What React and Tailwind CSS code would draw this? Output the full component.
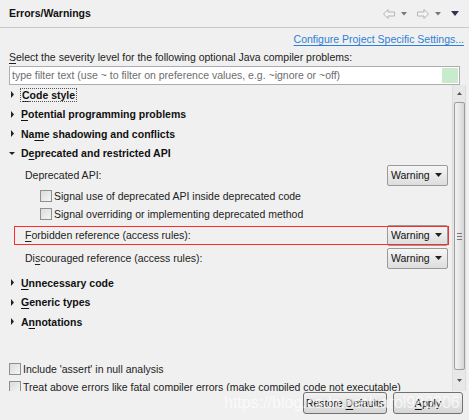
import React from 'react';

const font = { fontFamily: '"Liberation Sans", Arial, sans-serif' };

const Arrow = ({ open }) => (
  <svg width="7" height="7" viewBox="0 0 7 7" className="shrink-0">
    {open ? <path d="M0 2 L6 2 L3 5 Z" fill="#222" /> : <path d="M2 0 L5 3.5 L2 7 Z" fill="#222" />}
  </svg>
);

const U = ({ children }) => <span className="underline underline-offset-2">{children}</span>;

const TreeRow = ({ open, children, focus }) => (
  <div className="h-[19.5px] shrink-0 flex items-center pl-[9px] gap-[5px]">
    <Arrow open={open} />
    <span className={`font-bold text-[#111] ${focus ? 'outline outline-1 outline-dotted outline-[#555] px-[1px] py-[1px]' : ''}`}>{children}</span>
  </div>
);

const Combo = () => (
  <div className="w-[61px] h-[21px] shrink-0 flex items-center justify-between pl-[3px] pr-[5px] border border-[#9a9a9a] rounded-[2px] bg-gradient-to-b from-[#f6f6f6] to-[#dddddd] text-[#111]">
    <span>Warning</span>
    <svg width="7" height="4" viewBox="0 0 7 4"><path d="M0 0 L7 0 L3.5 4 Z" fill="#222" /></svg>
  </div>
);

const Check = ({ children, className = '' }) => (
  <div className={`h-[18px] shrink-0 flex items-center gap-[2px] whitespace-nowrap ${className}`}>
    <div className="w-[12px] h-[12px] shrink-0 border border-[#8e8f8f] bg-gradient-to-br from-[#dcdcdc] to-[#f4f4f4]" />
    <span className="text-[#222]">{children}</span>
  </div>
);

const SettingRow = ({ label, h = 'h-[22px]' }) => (
  <div className={`${h} shrink-0 flex items-center justify-between pl-[25px] pr-[4px]`}>
    <span className="text-[#222]">{label}</span>
    <Combo />
  </div>
);

export default function App() {
  return (
    <div style={font} className="relative w-[469px] h-[420px] overflow-hidden bg-[#f0f0f0] text-[10.5px] leading-none">
      {/* header */}
      <div className="h-[28px] flex items-center justify-between pl-[9px] pr-[10px] border-b border-[#c8c8c8]">
        <span className="font-bold text-[10.5px] text-[#111]">Errors/Warnings</span>
        <div className="flex items-center gap-[6px]">
          <svg width="12" height="10" viewBox="0 0 12 10"><path d="M0.5 5 L5 0.5 L5 3 L11.5 3 L11.5 7 L5 7 L5 9.5 Z" fill="#f4f4f4" stroke="#b4b4b4" /></svg>
          <svg width="6" height="4" viewBox="0 0 6 4"><path d="M0 0 L6 0 L3 3.5 Z" fill="#777" /></svg>
          <svg width="12" height="10" viewBox="0 0 12 10" className="ml-[4px]"><path d="M11.5 5 L7 0.5 L7 3 L0.5 3 L0.5 7 L7 7 L7 9.5 Z" fill="#f4f4f4" stroke="#b4b4b4" /></svg>
          <svg width="6" height="4" viewBox="0 0 6 4"><path d="M0 0 L6 0 L3 3.5 Z" fill="#777" /></svg>
          <svg width="8" height="5" viewBox="0 0 8 5" className="ml-[4px]"><path d="M0 0 L8 0 L4 5 Z" fill="#333355" /></svg>
        </div>
      </div>

      {/* link */}
      <div className="h-[22px] flex items-center justify-end pr-[5px]">
        <span className="text-[#2f7fd6] underline underline-offset-2">Configure Project Specific Settings...</span>
      </div>

      <div className="h-[15px] flex items-center pl-[9px] text-[#222]">
        <span><U>S</U>elect the severity level for the following optional Java compiler problems:</span>
      </div>

      {/* filter */}
      <div className="mx-[9px] mt-[1px] h-[19px] flex items-center justify-between border border-[#abadb3] bg-white pl-[2px] pr-[1px]">
        <span className="text-[#6d6d6d]">type filter text (use ~ to filter on preference values, e.g. ~ignore or ~off)</span>
        <div className="w-[16px] h-[15px] bg-[#c8eccb]" />
      </div>

      {/* scrolled content */}
      <div className="h-[306px] flex">
        <div className="flex-1 flex flex-col overflow-hidden">
          <TreeRow focus><U>C</U>ode style</TreeRow>
          <TreeRow><U>P</U>otential programming problems</TreeRow>
          <TreeRow>Na<U>m</U>e shadowing and conflicts</TreeRow>
          <TreeRow open>D<U>e</U>precated and restricted API</TreeRow>
          <SettingRow h="h-[24px]" label="Deprecated API:" />
          <Check className="pl-[40px]">Signal use of deprecated API inside deprecated code</Check>
          <Check className="pl-[40px]">Signal overriding or implementing deprecated method</Check>
          <div className="relative h-[24px] shrink-0">
            <SettingRow h="h-[24px]" label={<><U>F</U>orbidden reference (access rules):</>} />
            <div className="absolute left-[15px] right-[4px] top-[4px] h-[17px] shadow-[0_0_0_1px_#ff2b2b] pointer-events-none" />
          </div>
          <SettingRow label={<>Di<U>s</U>couraged reference (access rules):</>} />
          <div className="h-[4px] shrink-0" />
          <TreeRow><U>U</U>nnecessary code</TreeRow>
          <TreeRow><U>G</U>eneric types</TreeRow>
          <TreeRow>A<U>n</U>notations</TreeRow>
          <div className="h-[28.5px] shrink-0" />
          <Check className="pl-[9px]">Include 'assert' in null analysis</Check>
          <Check className="pl-[9px]">Treat above errors like fatal compiler errors (make compiled code not executable)</Check>
        </div>

        {/* scrollbar */}
        <div className="w-[14px] mr-[3px] flex flex-col items-center bg-[#e8e8e8] border-x border-[#dcdcdc]">
          <div className="h-[17px] flex items-center justify-center">
            <svg width="5" height="3" viewBox="0 0 5 3"><path d="M0 3 L5 3 L2.5 0 Z" fill="#555" /></svg>
          </div>
          <div className="w-[11px] h-[268px] rounded-[2px] border border-[#9c9c9c] bg-gradient-to-r from-[#f3f3f3] via-[#e6e6e6] to-[#d6d6d6] flex items-center justify-center">
            <div className="flex flex-col gap-[2px]">
              <div className="w-[5px] h-[1px] bg-[#777]" />
              <div className="w-[5px] h-[1px] bg-[#777]" />
              <div className="w-[5px] h-[1px] bg-[#777]" />
            </div>
          </div>
          <div className="flex-1 flex items-center justify-center">
            <svg width="5" height="3" viewBox="0 0 5 3"><path d="M0 0 L5 0 L2.5 3 Z" fill="#555" /></svg>
          </div>
        </div>
      </div>

      {/* buttons */}
      <div className="mt-[1px] flex justify-end gap-[6px] pr-[6px]">
        <button className="w-[84px] h-[22px] whitespace-nowrap border border-[#707070] rounded-[3px] bg-gradient-to-b from-[#f2f2f2] to-[#d6d6d6] text-[#111]">
          Restore <U>D</U>efaults
        </button>
        <button className="w-[70px] h-[22px] border border-[#707070] rounded-[3px] bg-gradient-to-b from-[#f2f2f2] to-[#d6d6d6] text-[#111]">
          <U>A</U>pply
        </button>
      </div>

      {/* watermark */}
      <div className="absolute left-[224px] top-[395px] text-[16px] leading-none whitespace-nowrap text-white/70 pointer-events-none">
        https://blog.csdn.net/carol980306
      </div>
    </div>
  );
}
